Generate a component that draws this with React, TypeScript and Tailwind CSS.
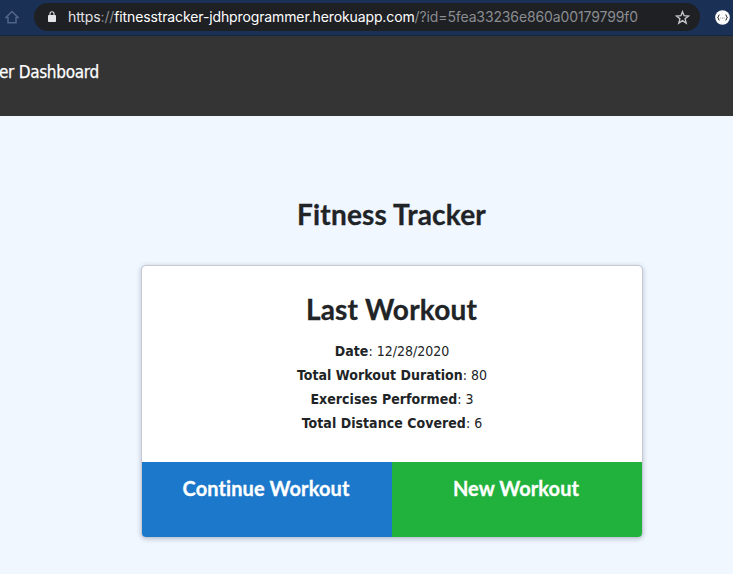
import React from "react";

const stats = [
  { label: "Date", value: "12/28/2020" },
  { label: "Total Workout Duration", value: "80" },
  { label: "Exercises Performed", value: "3" },
  { label: "Total Distance Covered", value: "6" },
];

function HomeIcon() {
  return (
    <svg className="ml-[5px] h-[14px] w-[14px] shrink-0" viewBox="0 0 14 14" fill="none" stroke="#506489" strokeWidth="1.5">
      <path d="M1 7.4 7 1.5l6 5.9h-2v5.4H3V7.4Z" />
    </svg>
  );
}

function LockIcon() {
  return (
    <svg className="ml-[13px] h-[12px] w-[10px] shrink-0" viewBox="0 0 10 12">
      <rect x="1" y="4" width="8" height="7" rx="0.8" fill="#e4e5e8" />
      <path d="M3 4.3V2.8a2 2 0 0 1 4 0v1.5" fill="none" stroke="#e4e5e8" strokeWidth="1.1" />
    </svg>
  );
}

function StarIcon() {
  return (
    <svg className="mr-[10px] ml-auto h-[15px] w-[15px] shrink-0" viewBox="0 0 15 15" fill="none" stroke="#c4c6ca" strokeWidth="1.4">
      <path d="m7.5 1.7 1.6 4 4.4.3-3.4 2.8 1.1 4.3-3.7-2.4-3.7 2.4 1.1-4.3L1.5 6l4.4-.3Z" />
    </svg>
  );
}

function ExtensionIcon() {
  return (
    <svg className="ml-[14.5px] h-[15px] w-[15px] shrink-0" viewBox="0 0 15 15">
      <circle cx="7.5" cy="7.5" r="7.3" fill="#fff" />
      <path d="M4.6 4.8Q3.5 4.8 3.5 6 3.5 7.5 2.5 7.5 3.5 7.5 3.5 9 3.5 10.2 4.6 10.2M10.4 4.8q1.1 0 1.1 1.2 0 1.5 1 1.5-1 0-1 1.5 0 1.2-1.1 1.2" fill="none" stroke="#222" strokeWidth=".9" />
      <path d="M5.3 8h.9m.8 0h.9m.8 0h.9" stroke="#777" strokeWidth=".9" />
    </svg>
  );
}

function BrowserBar() {
  return (
    <div className="flex h-9 items-start border-b border-[#152643] bg-[#1b3055] pt-[3px]">
      <div className="flex h-7 items-center"><HomeIcon /></div>
      <div className="ml-[15px] flex h-7 w-[666px] items-center rounded-full bg-[#1e2024]">
        <LockIcon />
        <span className="ml-[11px] whitespace-nowrap font-['Inter',sans-serif] text-[14px] leading-5 tracking-[-0.12px] text-[#8b8d91]">
          <span className="text-[#e3e4e6]">https</span>://<span className="text-white">fitnesstracker-jdhprogrammer.herokuapp.com</span>/?id=5fea33236e860a00179799f0
        </span>
        <StarIcon />
      </div>
      <div className="flex h-7 items-center"><ExtensionIcon /></div>
    </div>
  );
}

export default function App() {
  return (
    <div className="h-[574px] w-[733px] overflow-hidden bg-[#f0f7ff] text-[#212426]">
      <BrowserBar />
      <nav className="flex h-20 items-center bg-[#343434] pb-1.5">
        <span className="-ml-px whitespace-nowrap font-['DejaVu_Sans_Condensed','DejaVu_Sans',sans-serif] text-[17px] tracking-[-0.3px] text-white [-webkit-text-stroke:0.25px_white]">er Dashboard</span>
      </nav>
      <main className="ml-[141px] flex w-[502px] flex-col items-center pt-20">
        <h1 className="pr-px font-['Lato',sans-serif] text-[28px] leading-9 font-bold tracking-[0.18px] [-webkit-text-stroke:0.3px_#212426]">Fitness Tracker</h1>
        <section className="mt-[33px] flex h-[273px] w-full flex-col overflow-hidden rounded-[5px] border border-[#c6cad6] bg-white shadow-[0_1px_5px_rgba(50,60,90,0.3)]">
          <div className="flex h-[196px] flex-col items-center pt-[25px]">
            <h2 className="pr-px font-['Lato',sans-serif] text-[28px] leading-9 font-bold tracking-[0.18px] [-webkit-text-stroke:0.3px_#212426]">Last Workout</h2>
            <div className="mt-3 text-center font-['DejaVu_Sans_Condensed','DejaVu_Sans',sans-serif] text-[14px] leading-6">
              {stats.map((item) => (
                <p key={item.label}><strong className="tracking-[0.04px]">{item.label}</strong>: {item.value}</p>
              ))}
            </div>
          </div>
          <div className="grid flex-1 grid-cols-2 font-['Lato',sans-serif] text-xl leading-6 font-bold tracking-[0.1px] text-white [-webkit-text-stroke:0.3px_white]">
            <button className="flex justify-center bg-[#1c78ca] pt-[14px] pr-0.5">Continue Workout</button>
            <button className="flex justify-center bg-[#21b23e] pt-[14px] pr-0.5">New Workout</button>
          </div>
        </section>
      </main>
    </div>
  );
}
